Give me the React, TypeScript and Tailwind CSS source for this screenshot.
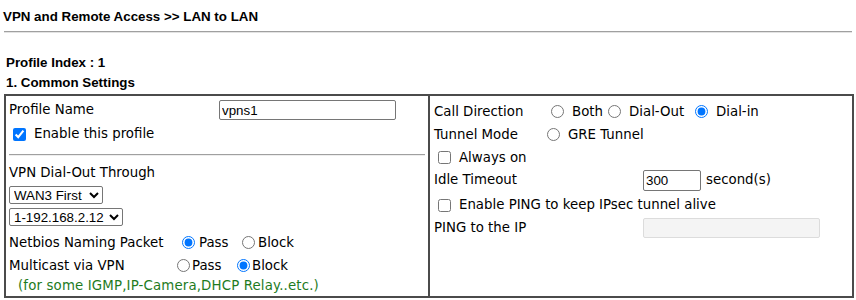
import React from 'react';

const verdana = { fontFamily: '"DejaVu Sans", Verdana, sans-serif' };

function Radio({ checked = false }: { checked?: boolean }) {
  return (
    <input
      type="radio"
      defaultChecked={checked}
      className="w-[13px] h-[13px] m-0 shrink-0"
    />
  );
}

function Check({ checked = false }: { checked?: boolean }) {
  return (
    <input
      type="checkbox"
      defaultChecked={checked}
      className="w-[13px] h-[13px] m-0 shrink-0"
    />
  );
}

const arial = "font-['Liberation_Sans',Arial,sans-serif]";

export default function App() {
  return (
    <div className={`w-[856px] h-[300px] bg-white text-black overflow-hidden ${arial}`}>
      <div className="pl-[3px] pt-[9px] h-[24px] text-[13.33px] font-bold leading-[15px]">
        VPN and Remote Access &gt;&gt; LAN to LAN
      </div>
      <div className="mx-[4px] mt-[7px] h-[2px] border-t border-b border-t-[#a0a0a0] border-b-[#e3e3e3]" />

      <div className="pl-[6px] mt-[22px] text-[13.33px] font-bold leading-[15px]">Profile Index : 1</div>
      <div className="pl-[6px] mt-[5px] text-[13.33px] font-bold leading-[15px]">1. Common Settings</div>

      <div className="ml-[4px] mt-[4px] w-[850px] h-[204px] border-2 border-[#4b4b4b] flex text-[13.33px]" style={verdana}>
        {/* left */}
        <div className="w-[424px] h-full border-r-2 border-[#4b4b4b] flex flex-col px-[3px]">
          <div className="h-[24px] mt-[2px] flex items-center">
            <span className="w-[210px]">Profile Name</span>
            <input
              type="text"
              defaultValue="vpns1"
              className={`w-[177px] h-[20px] border border-[#767676] rounded-[2px] px-[2px] text-[13.33px] ${arial}`}
            />
          </div>
          <div className="h-[24px] flex items-center pl-[4px] gap-[8px]">
            <Check checked />
            <span>Enable this profile</span>
          </div>
          <div className="mt-[8px] h-[2px] border-t border-b border-t-[#a0a0a0] border-b-[#eeeeee]" />
          <div className="h-[22px] mt-[6px] flex items-center">VPN Dial-Out Through</div>
          <div className="h-[21px] flex items-center">
            <select className={`w-[94px] h-[18px] border border-[#767676] rounded-[2px] text-[13.33px] text-black ${arial}`}>
              <option>WAN3 First</option>
            </select>
          </div>
          <div className="h-[24px] flex items-center">
            <select className={`w-[114px] h-[18px] border border-[#767676] rounded-[2px] text-[13.33px] text-black ${arial}`}>
              <option>1-192.168.2.12</option>
            </select>
          </div>
          <div className="h-[23px] mt-[2px] flex items-center">
            <span className="w-[173px] shrink-0">Netbios Naming Packet</span>
            <Radio checked />
            <span className="ml-[4px] w-[43px]">Pass</span>
            <Radio />
            <span className="ml-[3px]">Block</span>
          </div>
          <div className="h-[23px] flex items-center">
            <span className="w-[168px] shrink-0">Multicast via VPN</span>
            <Radio />
            <span className="ml-[2px] w-[45px]">Pass</span>
            <Radio checked />
            <span className="ml-[2px]">Block</span>
          </div>
          <div className="h-[18px] flex items-center pl-[9px] tracking-[0.15px] text-[#1e7b1e]">
            (for some IGMP,IP-Camera,DHCP Relay..etc.)
          </div>
        </div>

        {/* right */}
        <div className="flex-1 h-full flex flex-col pl-[4px]">
          <div className="h-[23px] mt-[4px] flex items-center">
            <span className="w-[117px] shrink-0">Call Direction</span>
            <Radio />
            <span className="ml-[8px] w-[36px]">Both</span>
            <Radio />
            <span className="ml-[8px] w-[66px]">Dial-Out</span>
            <Radio checked />
            <span className="ml-[8px]">Dial-in</span>
          </div>
          <div className="h-[23px] flex items-center">
            <span className="w-[113px] shrink-0">Tunnel Mode</span>
            <Radio />
            <span className="ml-[8px]">GRE Tunnel</span>
          </div>
          <div className="h-[23px] flex items-center pl-[4px] gap-[8px]">
            <Check />
            <span>Always on</span>
          </div>
          <div className="h-[22px] flex items-center">
            <span className="w-[209px] shrink-0">Idle Timeout</span>
            <input
              type="text"
              defaultValue="300"
              className={`w-[58px] h-[21px] border border-[#767676] rounded-[2px] px-[2px] text-[13.33px] ${arial}`}
            />
            <span className="ml-[5px]">second(s)</span>
          </div>
          <div className="h-[24px] mt-[2px] flex items-center pl-[4px] gap-[8px]">
            <Check />
            <span>Enable PING to keep IPsec tunnel alive</span>
          </div>
          <div className="h-[21px] flex items-center">
            <span className="w-[209px] shrink-0">PING to the IP</span>
            <input
              type="text"
              disabled
              className="w-[177px] h-[20px] border border-[#dcdcdc] bg-[#f4f4f4] rounded-[2px]"
            />
          </div>
        </div>
      </div>
    </div>
  );
}
